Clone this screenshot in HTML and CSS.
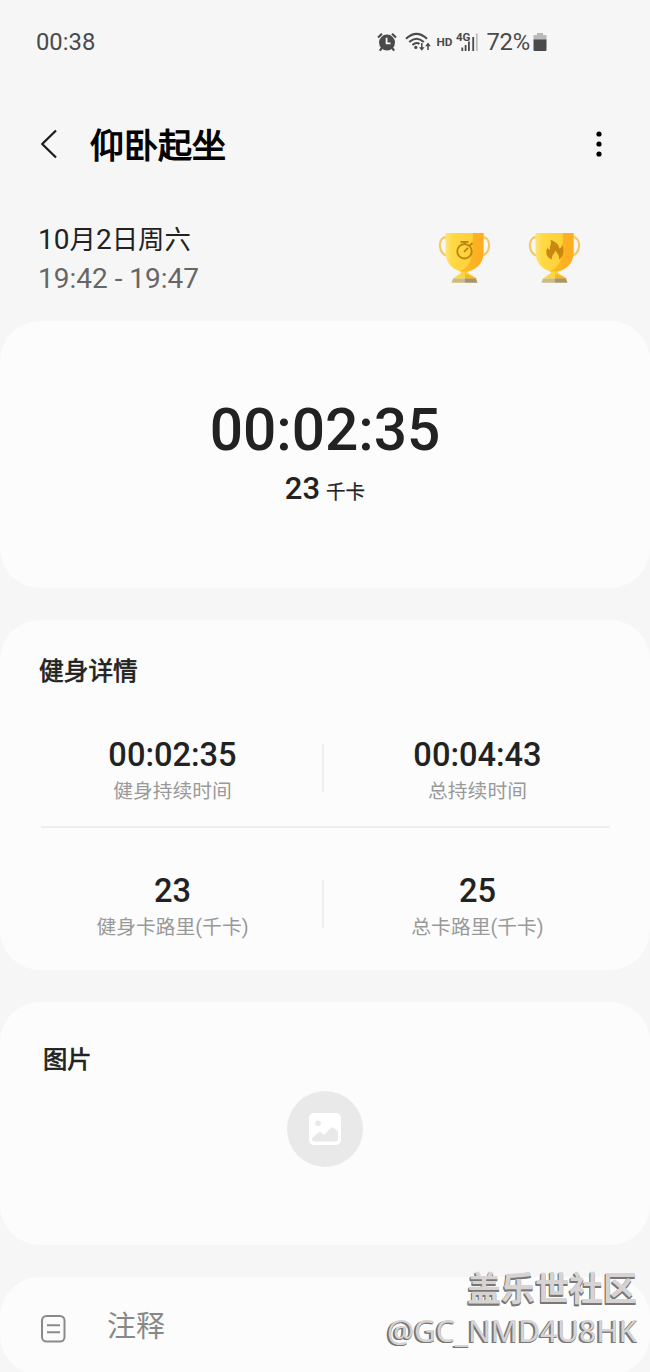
FILE: index.html
```html
<!DOCTYPE html>
<html lang="zh-CN">
<head>
<meta charset="utf-8">
<title>仰卧起坐</title>
<link rel="stylesheet" href="styles.css">
</head>
<body>
<main class="screen">
  <header class="status">
    <span class="clock">00:38</span>
    <div class="status-right">
      <svg class="alarm" width="20" height="20" viewBox="0 0 20 20"><circle cx="10" cy="10.6" r="8" fill="#4a4a4a"/><path d="M1 5.5 5 1.8M19 5.5 15 1.8M4.6 16 3 18.8M15.4 16 17 18.8" stroke="#4a4a4a" stroke-width="2.2" fill="none"/><path d="M9.6 5.8V11.3H13.5" stroke="#f7f7f7" stroke-width="1.8" fill="none"/></svg>
      <svg class="wifi" width="26" height="20" viewBox="0 0 26 20"><g fill="none" stroke="#4a4a4a" stroke-width="2.1"><path d="M1 6.8Q11.5-3 22 6.8M4.2 10.1Q11.5 3.4 18.8 10.1M7.4 13Q11.5 9.6 14.5 12"/><path d="M16.8 11V17M23 18V12.5" stroke-width="1.5"/></g><circle cx="10.8" cy="15.4" r="1.6" fill="#4a4a4a"/><path d="M14 15.2H19.6L16.8 18.8ZM20.2 14.2H25.8L23 10.5Z" fill="#4a4a4a"/></svg>
      <b class="hd">HD</b>
      <svg class="signal" width="23" height="24" viewBox="0 -4 23 24"><text x="0" y="8.8" class="net">4G</text><path d="M6.3 19V15.5M9.6 19V13M12.9 19V9.5M17.2 19V5" stroke="#4a4a4a" stroke-width="1.8"/><path d="M20.8 19V1.5" stroke="#bdbdbd" stroke-width="1.8"/></svg>
      <span class="percent">72%</span>
      <svg class="battery" width="14" height="20" viewBox="0 0 14 20"><path d="M4 1H10V3H13Q13.5 3 13.5 4V8H.5V4Q.5 3 1 3H4Z" fill="#b9b9b9"/><path d="M.5 7.5H13.5V18Q13.5 19 12.5 19H1.5Q.5 19 .5 18Z" fill="#4a4a4a"/></svg>
    </div>
  </header>

  <nav class="titlebar">
    <svg class="back" width="20" height="32" viewBox="0 0 20 32"><path d="M17 2.5 3.2 16 17 29.5" fill="none" stroke="#1c1c1c" stroke-width="2.3" stroke-linejoin="round"/></svg>
    <h1>仰卧起坐</h1>
    <svg class="more" width="8" height="28" viewBox="0 0 8 28"><circle cx="4" cy="4" r="2.6"/><circle cx="4" cy="14" r="2.6"/><circle cx="4" cy="24" r="2.6"/></svg>
  </nav>

  <section class="summary">
    <div>
      <div class="date">10<i>月</i>2<i>日周六</i></div>
      <div class="range">19:42 - 19:47</div>
    </div>
    <div class="trophies">
      <svg width="54" height="54" viewBox="0 0 54 54">
        <defs><linearGradient id="cup" x1="0" x2="1"><stop offset="0" stop-color="#ffe478"/><stop offset=".18" stop-color="#ffd945"/><stop offset="1" stop-color="#ffca2e"/></linearGradient><linearGradient id="side" x1="0" x2="1"><stop offset="0" stop-color="#f9bd27"/><stop offset="1" stop-color="#ffac20"/></linearGradient></defs>
        <path d="M10 7.3C-1 5-1 25 11 26.5M43 7.3C54 5 54 25 42 26.5" fill="none" stroke="#f5c95c" stroke-width="2.2"/>
        <path d="M7.5 3H45.5V22C45.5 33 39 39 30 41.5V43L39 48.5H15L23 43V41.5C14 39 7.5 33 7.5 22Z" fill="url(#cup)"/>
        <path d="M41 3H45.5V22C45.5 33 39 39 30 41.5H21C36 37 34 20 35 3ZM27 43 39 48.8H27Z" fill="url(#side)"/>
        <path d="M15 48.5H26.5V52.8H13.5Z" fill="#cbbb82"/><path d="M26.5 48.5H38L39.5 52.8H26.5Z" fill="#a5966a"/>
        <g fill="none" stroke="#b9830f" stroke-width="1.8"><circle cx="26.5" cy="21.3" r="7.2"/><path d="M22.5 11.8H30.5M26.5 12V14.5M32 15.5 34.5 13M26 22 30 17.8"/></g>
      </svg>
      <svg width="54" height="54" viewBox="0 0 54 54">
        <path d="M10 7.3C-1 5-1 25 11 26.5M43 7.3C54 5 54 25 42 26.5" fill="none" stroke="#f5c95c" stroke-width="2.2"/>
        <path d="M7.5 3H45.5V22C45.5 33 39 39 30 41.5V43L39 48.5H15L23 43V41.5C14 39 7.5 33 7.5 22Z" fill="url(#cup)"/>
        <path d="M41 3H45.5V22C45.5 33 39 39 30 41.5H21C36 37 34 20 35 3ZM27 43 39 48.8H27Z" fill="url(#side)"/>
        <path d="M15 48.5H26.5V52.8H13.5Z" fill="#cbbb82"/><path d="M26.5 48.5H38L39.5 52.8H26.5Z" fill="#a5966a"/>
        <path d="M22.2 9.8C28 12 31 14.5 31.3 18.5C33.5 17.5 34.2 16 34 14C36.5 20 36 26.5 30.8 29.5C32 25.5 29 23.5 27.5 20.5C26.8 23.5 23 25.5 24 29.6C17.5 27 17.5 21.5 19.7 17.5C20.2 19 21 19.8 22 19.6C21 16 24.5 13.5 22.2 9.8Z" fill="#c9880f"/>
      </svg>
    </div>
  </section>

  <section class="card total">
    <div class="total-time">00:02:35</div>
    <div class="total-cal">23<small>千卡</small></div>
  </section>

  <section class="card details">
    <h2>健身详情</h2>
    <div class="row">
      <div class="cell"><strong>00:02:35</strong><span>健身持续时间</span></div>
      <div class="cell"><strong>00:04:43</strong><span>总持续时间</span></div>
    </div>
    <hr>
    <div class="row">
      <div class="cell"><strong>23</strong><span>健身卡路里(千卡)</span></div>
      <div class="cell"><strong>25</strong><span>总卡路里(千卡)</span></div>
    </div>
  </section>

  <section class="card pictures">
    <h2>图片</h2>
    <div class="add-picture">
      <svg width="34" height="34" viewBox="0 0 34 34"><rect x="1" y="1" width="32" height="32" rx="5" fill="#fff"/><circle cx="10" cy="11.2" r="2.8" fill="#e9e9e9"/><path d="M4 27V26L10.5 20.5Q12 19.5 13.5 21L16 23L23 16Q24.5 14.5 26 16L30 19.5V27Q30 29.5 27.5 29.5H6.5Q4 29.5 4 27Z" fill="#e9e9e9"/></svg>
    </div>
  </section>

  <section class="card notes">
    <svg width="26" height="30" viewBox="0 0 26 30"><g fill="none" stroke="#8a8a8a" stroke-width="2"><rect x="2" y="2" width="22.5" height="25.5" rx="4.5"/><path d="M7 11.3H20M7 18.3H20"/></g></svg>
    <span>注释</span>
  </section>

  <aside class="watermark"><b>盖乐世社区</b><span>@GC_NMD4U8HK</span></aside>
</main>
</body>
</html>
```
FILE: styles.css
```css
* { box-sizing: border-box; }
body { margin: 0; background: #f6f6f6; }
.screen {
  position: relative;
  width: 650px;
  height: 1372px;
  overflow: hidden;
  font-family: Roboto, "Noto Sans CJK SC", sans-serif;
  color: #222;
}
svg { display: block; flex: none; }
h1, h2 { margin: 0; }

.status {
  height: 84px;
  padding: 0 103px 0 36px;
  display: flex;
  align-items: center;
  justify-content: space-between;
  font-size: 23.8px;
  color: #4a4a4a;
}
.status-right { display: flex; align-items: center; }
.wifi { margin-left: 8px; }
.hd { margin-left: 5px; font-size: 11.8px; line-height: 16px; }
.signal { margin: -4px 0 0 4px; }
.net { font: bold 11.5px Roboto, sans-serif; fill: #4a4a4a; }
.percent { margin-left: 7px; font-size: 23.8px; letter-spacing: -.2px; }
.battery { margin-left: 3px; }

.titlebar {
  height: 120px;
  padding: 0 47px 0 39px;
  display: flex;
  align-items: center;
}
.titlebar h1 {
  margin-left: 31px;
  padding-top: 4px;
  font-size: 34px;
  font-weight: 400;
  line-height: 50px;
  color: #000;
  -webkit-text-stroke: 1.2px #000;
}
.more { margin-left: auto; }

.summary {
  height: 117px;
  padding: 16px 68px 0 38px;
  display: flex;
  justify-content: space-between;
}
.date, .range { height: 39px; line-height: 39px; font-size: 28px; white-space: nowrap; }
.date i { font-style: normal; font-size: 26.4px; }
.range { color: #666; }
.trophies { display: flex; gap: 36px; padding-top: 10px; }

.card { background: #fcfcfc; border-radius: 40px; margin-bottom: 32px; }
.card h2 {
  font-size: 24.7px;
  line-height: 36px;
  font-weight: 400;
  -webkit-text-stroke: .7px #222;
}
.total {
  height: 267px;
  padding-top: 73px;
  text-align: center;
  font-weight: 500;
}
.total-time { font-size: 58.6px; line-height: 72px; }
.total-cal { font-size: 31px; line-height: 46px; }
.total-cal small {
  margin-left: 6px;
  font-size: 19.5px;
  font-weight: 400;
  -webkit-text-stroke: .25px #222;
}

.details { height: 350px; padding: 34px 19px 0 21px; }
.details h2 { margin: 0 0 33px 18px; }
.row { display: grid; grid-template-columns: 303px 1fr; height: 104px; }
.cell { display: flex; flex-direction: column; align-items: center; }
.cell:first-child {
  background: linear-gradient(#eee, #eee) right 21px / 2px 48px no-repeat;
}
.cell strong { height: 51px; line-height: 65px; font-size: 32.6px; font-weight: 500; }
.cell span { line-height: 36px; font-size: 19.8px; color: #999; }
.details hr { height: 2px; margin: -1px 21px 31px 20px; border: 0; background: #efefef; }

.pictures { height: 243px; padding: 40px 43px 0; }
.pictures h2 { font-size: 24.3px; }
.add-picture {
  width: 76px;
  height: 76px;
  margin: 13px auto 0;
  display: grid;
  place-items: center;
  border-radius: 50%;
  background: #e9e9e9;
}

.notes {
  height: 98px;
  padding: 5px 40px 0;
  display: flex;
  align-items: center;
  gap: 41px;
  font-size: 29px;
  color: #888;
}
.notes span { padding-bottom: 9px; }

.watermark {
  position: absolute;
  right: 13px;
  bottom: 19px;
  display: flex;
  flex-direction: column;
  align-items: flex-end;
  color: #d6d3d2;
}
.watermark b {
  font: 700 34px/44px "Noto Sans CJK SC", sans-serif;
  text-shadow: -1px 1px 0 #777, 0 2px 0 #777, -1px 2px 0 #777;
}
.watermark span {
  font: 400 30px/44px "Noto Sans", sans-serif;
  text-shadow: -1px 1px 0 #777, 0 1px 0 #777, -2px 1px 0 #777;
}
```
